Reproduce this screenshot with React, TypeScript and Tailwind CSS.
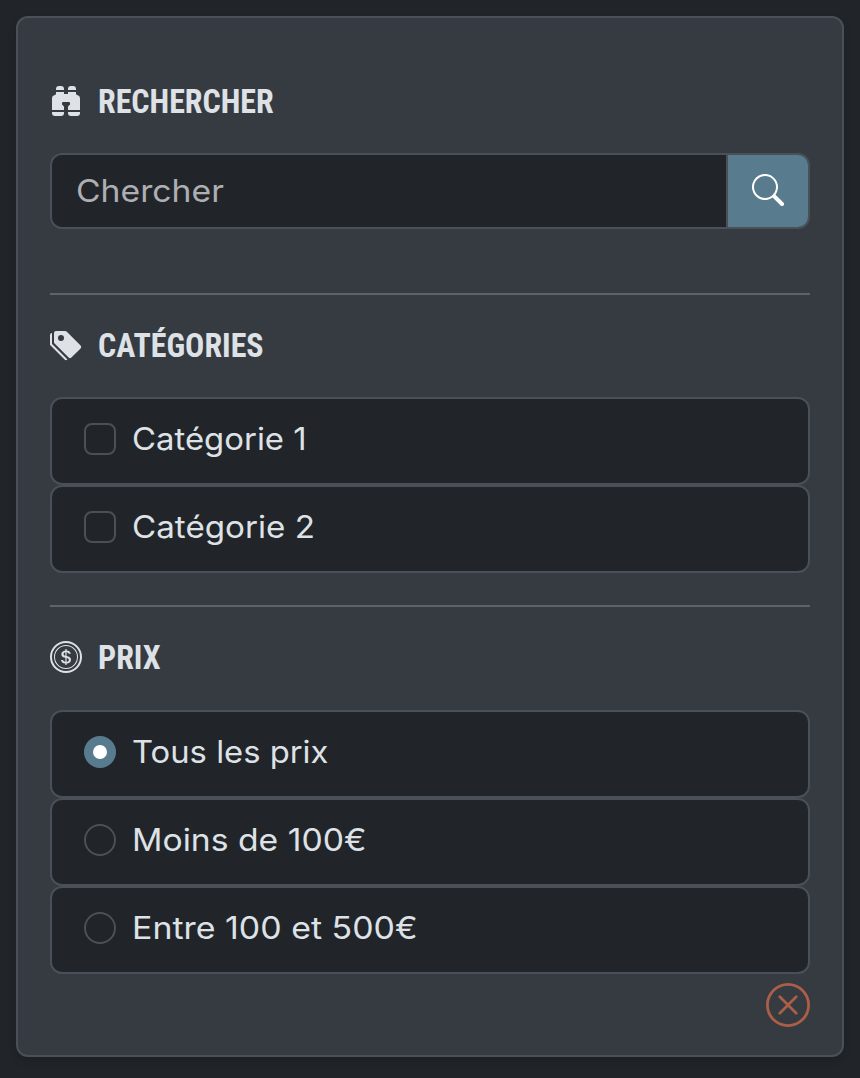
import type { ReactNode } from "react";
import { BsBinocularsFill, BsCoin, BsSearch, BsTagsFill, BsXCircle } from "react-icons/bs";

function Heading({ icon, children }: { icon: ReactNode; children: ReactNode }) {
  return (
    <h2 className="flex h-[38px] items-center gap-4 text-[#dee2e6]">
      {icon}
      <span className="origin-left scale-x-[0.968] whitespace-nowrap pt-[2px] font-['Roboto_Condensed',Roboto,sans-serif] text-[33px] leading-[38px] font-bold">
        {children}
      </span>
    </h2>
  );
}

function Option({ type, label, checked, stretch }: { type: "checkbox" | "radio"; label: string; checked?: boolean; stretch: string }) {
  const shape = type === "radio" ? "rounded-full" : "rounded-[8px]";
  const fill = checked ? "bg-[#587c8e]" : "border-2 border-[#495057]";
  return (
    <label className="flex h-[88px] items-start gap-4 rounded-[12px] border-2 border-[#495057] bg-[#212529] pt-[16px] pl-8">
      <input type={type} name={type} defaultChecked={checked} className="sr-only" />
      <span className={`mt-2 flex size-8 shrink-0 items-center justify-center ${shape} ${fill}`}>
        {checked && <span className="size-[14px] rounded-full bg-white" />}
      </span>
      <span className={`origin-left whitespace-nowrap text-[31px] leading-[48px] text-[#dee2e6] ${stretch}`}>{label}</span>
    </label>
  );
}

export default function App() {
  return (
    <div className="h-[1078px] bg-[#212529] p-4 font-[Inter,sans-serif]">
      <aside className="flex h-[1041px] flex-col rounded-[12px] border-2 border-[#495057] bg-[#363a41] px-8 pt-[64px] shadow-[0_4px_8px_rgba(0,0,0,0.15)]">
        <Heading icon={<BsBinocularsFill className="mb-[2px] size-8" />}>RECHERCHER</Heading>
        <div className="mt-[33px] flex h-[76px] shrink-0 overflow-hidden rounded-[12px] border-2 border-[#495057]">
          <div className="flex w-[674px] shrink-0 bg-[#212529]">
            <input
              placeholder="Chercher"
              className="w-[619px] origin-left scale-x-[1.088] bg-transparent pl-[22px] text-[31px] text-[#dee2e6] outline-none placeholder:text-[#adafb3]"
            />
          </div>
          <button aria-label="Chercher" className="flex flex-1 items-center justify-center border-l-2 border-[#495057] bg-[#587c8e] pb-[2px] text-white">
            <BsSearch className="size-8" />
          </button>
        </div>
        <hr className="mt-16 border-t-2 border-[#5e6269]" />
        <div className="mt-[31px]">
          <Heading icon={<BsTagsFill className="size-8" />}>CATÉGORIES</Heading>
        </div>
        <div className="mt-[33px]">
          <Option type="checkbox" label="Catégorie 1" stretch="scale-x-[1.061]" />
          <Option type="checkbox" label="Catégorie 2" stretch="scale-x-[1.07]" />
        </div>
        <hr className="mt-8 border-t-2 border-[#5e6269]" />
        <div className="mt-[31px]">
          <Heading icon={<BsCoin className="size-8" />}>PRIX</Heading>
        </div>
        <div className="mt-[34px]">
          <Option type="radio" label="Tous les prix" checked stretch="scale-x-[1.057]" />
          <Option type="radio" label="Moins de 100€" stretch="scale-x-[1.087]" />
          <Option type="radio" label="Entre 100 et 500€" stretch="scale-x-[1.094]" />
        </div>
        <button aria-label="Effacer" className="mt-[9px] self-end text-[#ab5f47]">
          <BsXCircle className="size-[44px]" />
        </button>
      </aside>
    </div>
  );
}
